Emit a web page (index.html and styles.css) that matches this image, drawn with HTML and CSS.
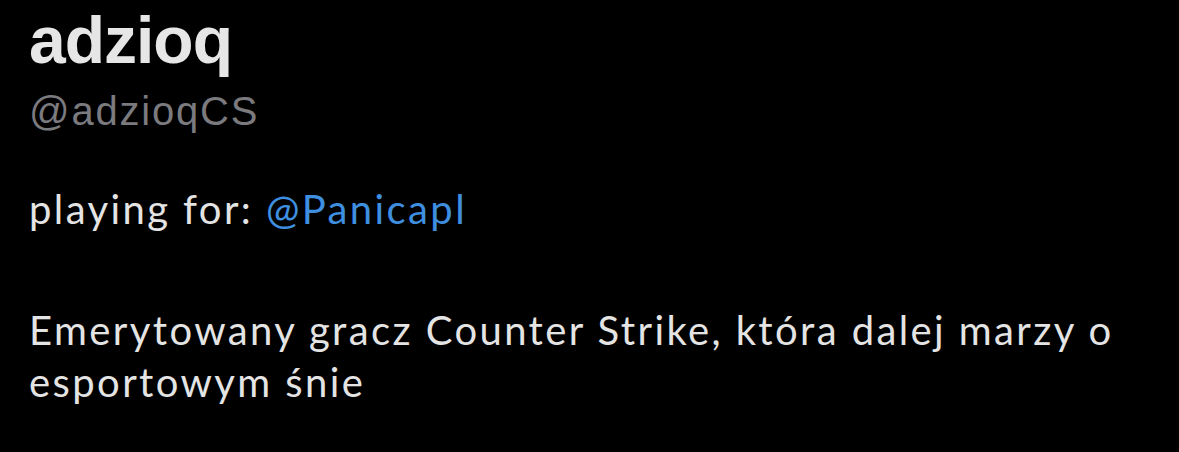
FILE: index.html
```html
<!DOCTYPE html>
<html lang="pl">
<head>
<meta charset="utf-8">
<title>adzioq</title>
<link rel="stylesheet" href="styles.css">
</head>
<body>
<main class="profile">
  <h1 class="name">adzioq</h1>
  <div class="handle">@adzioqCS</div>
  <p class="bio bio-first">playing for: <a class="mention" href="#">@Panicapl</a></p>
  <p class="bio bio-second">Emerytowany gracz Counter Strike, która dalej marzy o esportowym śnie</p>
</main>
</body>
</html>
```
FILE: styles.css
```css
html, body {
  margin: 0;
  padding: 0;
  background: #000;
}

.profile {
  padding: 0 30px 0 29px;
  width: 1120px;
}

.name {
  margin: 2px 0 0;
  font-family: "Liberation Sans", Arial, sans-serif;
  font-weight: 700;
  font-size: 66px;
  line-height: 76px;
  letter-spacing: -1px;
  color: #e6e6e6;
}

.handle {
  margin-top: 11px;
  font-family: "Liberation Sans", Arial, sans-serif;
  font-size: 40px;
  line-height: 44px;
  letter-spacing: 1.8px;
  color: #7a7a7f;
}

.bio {
  margin: 0;
  font-family: Lato, "Noto Sans", sans-serif;
  font-size: 40px;
  line-height: 52px;
  letter-spacing: 2.4px;
  color: #e4e4e4;
}

.bio-first {
  margin-top: 50px;
}

.bio-second {
  margin-top: 69px;
}

.mention {
  color: #3f8fe0;
  text-decoration: none;
}
```
